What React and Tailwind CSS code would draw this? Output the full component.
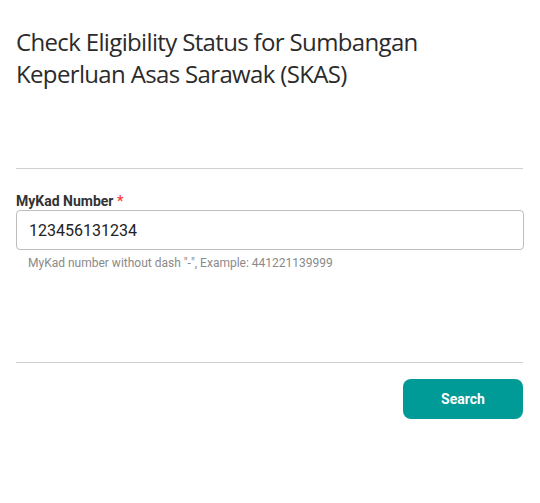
export default function App() {
  return (
    <div className="min-h-screen bg-white" style={{ fontFamily: 'Roboto, sans-serif' }}>
      <div className="px-4 pt-[26px]">
        <h1 className="text-[24px] leading-[32px] text-[#2b2b2b] font-medium font-['Open_Sans',sans-serif] tracking-[-0.65px] pr-20">
          Check Eligibility Status for Sumbangan Keperluan Asas Sarawak (SKAS)
        </h1>
        <div className="h-[78px]" />
        <hr className="border-0 border-t border-[#cfcfcf] mr-[1px]" />
        <div className="pt-[24px] pb-[92px]">
          <label className="block text-[14px] font-bold text-[#333333] leading-[16px] mb-[1px]">
            MyKad Number <span className="text-[#ff3b3b]">*</span>
          </label>
          <input
            defaultValue="123456131234"
            className="block w-full h-[40px] rounded-[4px] border border-[#bdbdbd] px-3 text-[16px] text-[#222222] outline-none"
          />
          <p className="mt-[6px] pl-3 text-[12px] leading-[14px] text-[#8a8a8a]">
            MyKad number without dash "-", Example: 441221139999
          </p>
        </div>
        <hr className="border-0 border-t border-[#cfcfcf] mr-[1px]" />
        <div className="flex justify-end pt-4 pr-[1px]">
          <button className="w-[120px] h-[40px] rounded-[8px] bg-[#009a97] text-white text-[14px] font-bold">
            Search
          </button>
        </div>
      </div>
    </div>
  );
}
